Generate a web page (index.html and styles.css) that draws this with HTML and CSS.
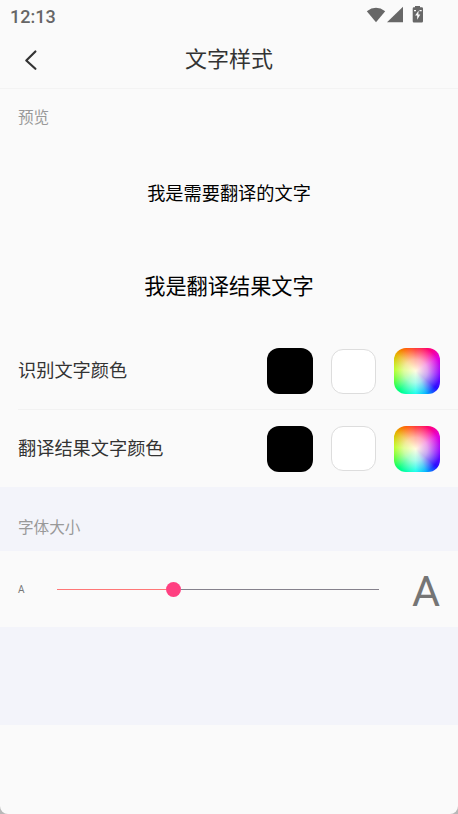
FILE: index.html
```html
<!DOCTYPE html>
<html lang="zh-CN">
<head>
<meta charset="utf-8">
<title>文字样式</title>
<link rel="stylesheet" href="styles.css">
</head>
<body>
<div class="screen">
  <div class="status">
    <span class="clock">12:13</span>
    <svg class="status-icons" width="58" height="20" viewBox="0 0 58 20" fill="#676767">
      <path d="M.8 5.2Q10-1.5 19.200 5.200L10 16.200Z"/>
      <path d="M21 16.200L37 .8V16.200Z"/>
      <path fill-rule="evenodd" d="M49 0H54V1.300H55.800Q57 1.300 57 2.500V15.200Q57 16.400 55.800 16.400H47.900Q46.700 16.400 46.700 15.200V2.500Q46.700 1.300 47.900 1.300H49ZM52.700 4.500L49.100 9.500H51.200V13.700L54.300 8.500H52.300ZM48 4V5.300H50V4ZM53.500 4V5.300H55.700V4Z"/>
    </svg>
  </div>
  <header class="header">
    <svg class="back" width="14" height="22" viewBox="0 0 14 22" fill="none" stroke="#333" stroke-width="2.200" stroke-linecap="round" stroke-linejoin="round"><path d="M11.400 2.500L2.300 11.500L11.400 19.800"/></svg>
    <h1 class="title">文字样式</h1>
  </header>
  <section class="preview">
    <h2 class="caption">预览</h2>
    <p class="source">我是需要翻译的文字</p>
    <p class="result">我是翻译结果文字</p>
  </section>
  <section class="colors">
    <div class="row">
      <span class="label">识别文字颜色</span>
      <span class="swatch black"></span><span class="swatch white"></span><span class="swatch spectrum"></span>
    </div>
    <div class="row second">
      <span class="label">翻译结果文字颜色</span>
      <span class="swatch black"></span><span class="swatch white"></span><span class="swatch spectrum"></span>
    </div>
  </section>
  <h2 class="caption band">字体大小</h2>
  <section class="size">
    <span class="small-a">A</span>
    <div class="slider"><span class="filled"></span><span class="thumb"></span><span class="rest"></span></div>
    <span class="large-a">A</span>
  </section>
  <div class="spacer"></div>
  <footer class="bottom"></footer>
</div>
</body>
</html>
```
FILE: styles.css
```css
* { box-sizing: border-box; }
body { margin: 0; background: #b8b8b8; }
h1, h2, p { margin: 0; font-weight: 400; }
.screen {
  display: flex;
  flex-direction: column;
  width: 458px;
  height: 814px;
  overflow: hidden;
  background: #fafafa;
  border-radius: 0 0 8px 8px;
  color: #333;
  font-family: Roboto, "Noto Sans CJK SC", sans-serif;
}
.status {
  display: flex;
  justify-content: space-between;
  height: 31px;
  padding: 6px 34px 0 10px;
}
.clock { font-size: 18px; line-height: 21px; font-weight: 500; color: #666; }
.status-icons { flex: none; }
.header {
  display: grid;
  grid-template-columns: 60px 1fr 60px;
  align-items: center;
  height: 58px;
  border-bottom: 1px solid #f3f3f3;
}
.back { margin-left: 24px; }
.title { text-align: center; font-size: 22px; line-height: 32px; }
.preview { height: 244px; padding-top: 17px; text-align: center; }
.caption { padding-left: 18px; font-size: 15.600px; line-height: 24px; color: #999; text-align: left; }
.source { margin-top: 50px; font-size: 18.200px; line-height: 28px; color: #000; }
.result { margin-top: 63px; font-size: 21.200px; line-height: 32px; color: #000; }
.row {
  display: flex;
  align-items: center;
  height: 77px;
  margin-left: 18px;
  padding-right: 18px;
  gap: 18px;
  border-bottom: 1px solid #f2f2f2;
}
.row.second { height: 77px; border: 0; }
.label { flex: 1; font-size: 18.200px; line-height: 28px; }
.swatch { flex: none; width: 46px; height: 46px; border-radius: 12px; }
.black { background: #000; }
.white { width: 45px; height: 45px; background: #fff; border: 1px solid #ddd; }
.spectrum {
  background:
    radial-gradient(circle at 47% 50%, #fffce0 0%, rgba(255,252,235,.65) 35%, rgba(255,255,255,0) 75%),
    conic-gradient(from 0deg at 47% 50%, #ff2020, #ff0080 35deg, #e000e0 60deg, #9000ff 95deg, #2810ff 130deg, #00b0ff 155deg, #00ffee 180deg, #00ff80 220deg, #60ff20 250deg, #b0ff00 275deg, #e8b000 312deg, #ff6000 335deg, #ff2020);
}
.band { height: 64px; padding-top: 29px; background: #f3f4fa; }
.size { display: flex; align-items: center; height: 76px; padding: 0 18px; }
.small-a { width: 39px; padding-top: 2px; font-size: 10px; line-height: 12px; color: #777; }
.slider { display: flex; align-items: center; width: 322px; height: 16px; }
.filled { width: 109px; height: 1px; background: #ff7777; }
.thumb { width: 15px; height: 15px; border-radius: 50%; background: #ff4081; }
.rest { flex: 1; height: 1px; background: #85818c; }
.large-a { flex: 1; padding-top: 3px; text-align: right; font-size: 43px; line-height: 50px; color: #757575; }
.spacer { height: 98px; background: #f3f4fa; }
.bottom { flex: 1; }
```
